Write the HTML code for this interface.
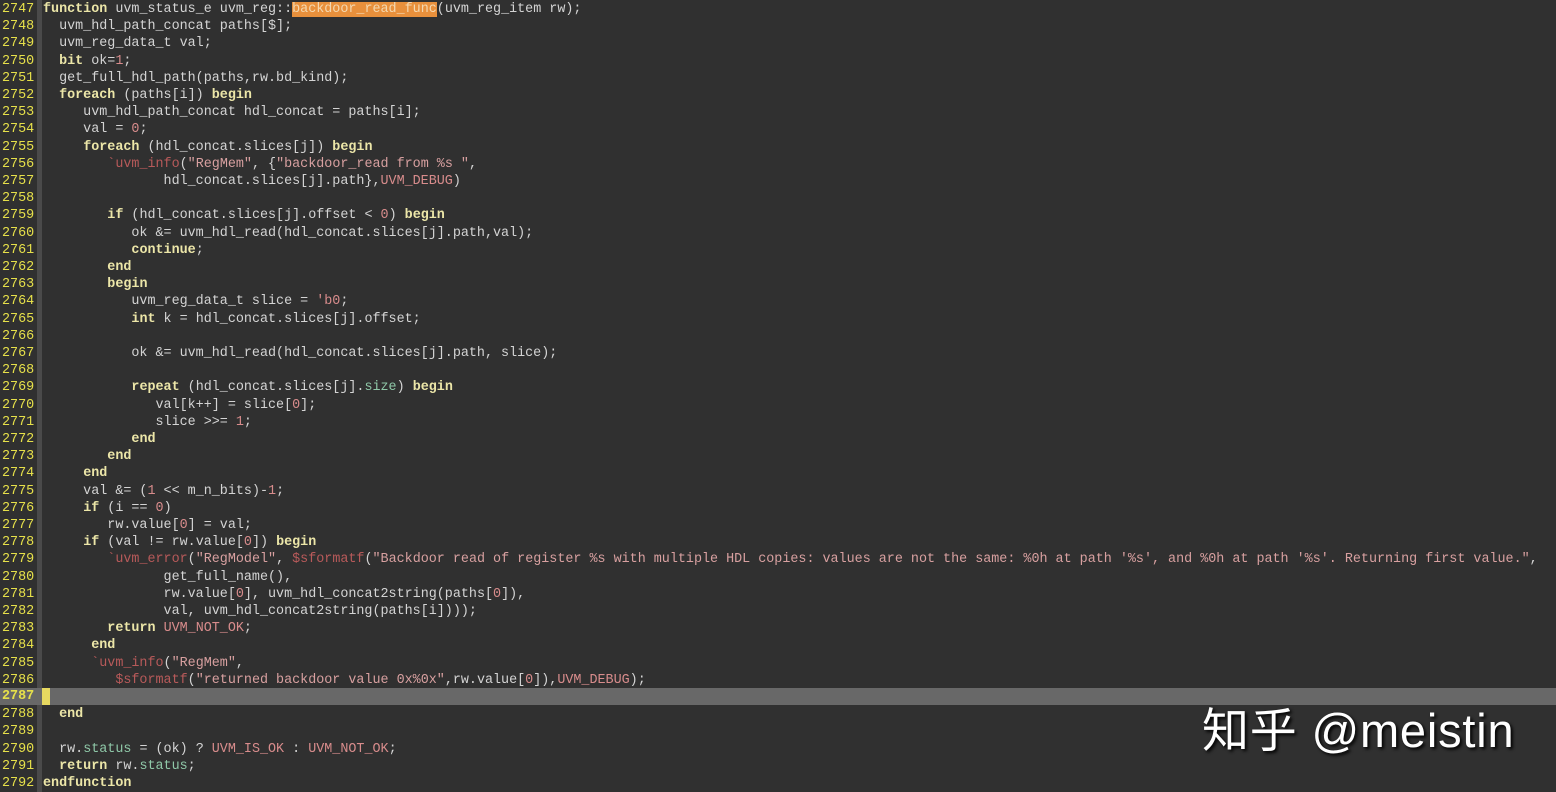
<!DOCTYPE html>
<html><head><meta charset="utf-8"><style>
body{margin:0;width:1556px;height:792px;background:#303030;overflow:hidden;position:relative;font-family:"Liberation Mono",monospace;font-size:13.4px;}
.l{position:absolute;left:0;height:17.2px;line-height:17.2px;width:1556px;white-space:pre;color:#d4d4d4;padding-top:1px}
.n{position:absolute;left:2px;width:33px;color:#e6e04a;}
.g{position:absolute;left:37px;top:0;width:5px;height:792px;background:#4a4a4a}
.c{position:absolute;left:43px}
.k{color:#ece6a8;font-weight:bold}
.s{color:#d8a0a0}
.m{color:#b85a5a}
.v{color:#d88c8c}
.t{color:#8fc8a8}
.hl{background:#e8903c;color:#f4d8b0}
.cur{background:#686868;padding-top:0;top:688px!important}
.wm{position:absolute;left:1202px;top:692px;font-family:"Liberation Sans","Noto Sans CJK SC",sans-serif;font-size:47px;color:#fff;text-shadow:2px 2px 3px #000;letter-spacing:0.8px}
</style></head><body>
<div class="g"></div>
<div class="l" style="top:0px"><span class="n">2747</span><span class="c"><span class="k">function</span> uvm_status_e uvm_reg::<span class="hl">backdoor_read_func</span>(uvm_reg_item rw);</span></div>
<div class="l" style="top:17.2px"><span class="n">2748</span><span class="c">  uvm_hdl_path_concat paths[$];</span></div>
<div class="l" style="top:34.4px"><span class="n">2749</span><span class="c">  uvm_reg_data_t val;</span></div>
<div class="l" style="top:51.6px"><span class="n">2750</span><span class="c">  <span class="k">bit</span> ok=<span class="v">1</span>;</span></div>
<div class="l" style="top:68.8px"><span class="n">2751</span><span class="c">  get_full_hdl_path(paths,rw.bd_kind);</span></div>
<div class="l" style="top:86px"><span class="n">2752</span><span class="c">  <span class="k">foreach</span> (paths[i]) <span class="k">begin</span></span></div>
<div class="l" style="top:103.2px"><span class="n">2753</span><span class="c">     uvm_hdl_path_concat hdl_concat = paths[i];</span></div>
<div class="l" style="top:120.4px"><span class="n">2754</span><span class="c">     val = <span class="v">0</span>;</span></div>
<div class="l" style="top:137.6px"><span class="n">2755</span><span class="c">     <span class="k">foreach</span> (hdl_concat.slices[j]) <span class="k">begin</span></span></div>
<div class="l" style="top:154.8px"><span class="n">2756</span><span class="c">        <span class="m">`uvm_info</span>(<span class="s">"RegMem"</span>, {<span class="s">"backdoor_read from %s "</span>,</span></div>
<div class="l" style="top:172px"><span class="n">2757</span><span class="c">               hdl_concat.slices[j].path},<span class="v">UVM_DEBUG</span>)</span></div>
<div class="l" style="top:189.2px"><span class="n">2758</span></div>
<div class="l" style="top:206.4px"><span class="n">2759</span><span class="c">        <span class="k">if</span> (hdl_concat.slices[j].offset &lt; <span class="v">0</span>) <span class="k">begin</span></span></div>
<div class="l" style="top:223.6px"><span class="n">2760</span><span class="c">           ok &amp;= uvm_hdl_read(hdl_concat.slices[j].path,val);</span></div>
<div class="l" style="top:240.8px"><span class="n">2761</span><span class="c">           <span class="k">continue</span>;</span></div>
<div class="l" style="top:258px"><span class="n">2762</span><span class="c">        <span class="k">end</span></span></div>
<div class="l" style="top:275.2px"><span class="n">2763</span><span class="c">        <span class="k">begin</span></span></div>
<div class="l" style="top:292.4px"><span class="n">2764</span><span class="c">           uvm_reg_data_t slice = <span class="v">'b0</span>;</span></div>
<div class="l" style="top:309.6px"><span class="n">2765</span><span class="c">           <span class="k">int</span> k = hdl_concat.slices[j].offset;</span></div>
<div class="l" style="top:326.8px"><span class="n">2766</span></div>
<div class="l" style="top:344px"><span class="n">2767</span><span class="c">           ok &amp;= uvm_hdl_read(hdl_concat.slices[j].path, slice);</span></div>
<div class="l" style="top:361.2px"><span class="n">2768</span></div>
<div class="l" style="top:378.4px"><span class="n">2769</span><span class="c">           <span class="k">repeat</span> (hdl_concat.slices[j].<span class="t">size</span>) <span class="k">begin</span></span></div>
<div class="l" style="top:395.6px"><span class="n">2770</span><span class="c">              val[k++] = slice[<span class="v">0</span>];</span></div>
<div class="l" style="top:412.8px"><span class="n">2771</span><span class="c">              slice &gt;&gt;= <span class="v">1</span>;</span></div>
<div class="l" style="top:430px"><span class="n">2772</span><span class="c">           <span class="k">end</span></span></div>
<div class="l" style="top:447.2px"><span class="n">2773</span><span class="c">        <span class="k">end</span></span></div>
<div class="l" style="top:464.4px"><span class="n">2774</span><span class="c">     <span class="k">end</span></span></div>
<div class="l" style="top:481.6px"><span class="n">2775</span><span class="c">     val &amp;= (<span class="v">1</span> &lt;&lt; m_n_bits)-<span class="v">1</span>;</span></div>
<div class="l" style="top:498.8px"><span class="n">2776</span><span class="c">     <span class="k">if</span> (i == <span class="v">0</span>)</span></div>
<div class="l" style="top:516px"><span class="n">2777</span><span class="c">        rw.value[<span class="v">0</span>] = val;</span></div>
<div class="l" style="top:533.2px"><span class="n">2778</span><span class="c">     <span class="k">if</span> (val != rw.value[<span class="v">0</span>]) <span class="k">begin</span></span></div>
<div class="l" style="top:550.4px"><span class="n">2779</span><span class="c">        <span class="m">`uvm_error</span>(<span class="s">"RegModel"</span>, <span class="m">$sformatf</span>(<span class="s">"Backdoor read of register %s with multiple HDL copies: values are not the same: %0h at path '%s', and %0h at path '%s'. Returning first value."</span>,</span></div>
<div class="l" style="top:567.6px"><span class="n">2780</span><span class="c">               get_full_name(),</span></div>
<div class="l" style="top:584.8px"><span class="n">2781</span><span class="c">               rw.value[<span class="v">0</span>], uvm_hdl_concat2string(paths[<span class="v">0</span>]),</span></div>
<div class="l" style="top:602px"><span class="n">2782</span><span class="c">               val, uvm_hdl_concat2string(paths[i])));</span></div>
<div class="l" style="top:619.2px"><span class="n">2783</span><span class="c">        <span class="k">return</span> <span class="v">UVM_NOT_OK</span>;</span></div>
<div class="l" style="top:636.4px"><span class="n">2784</span><span class="c">      <span class="k">end</span></span></div>
<div class="l" style="top:653.6px"><span class="n">2785</span><span class="c">      <span class="m">`uvm_info</span>(<span class="s">"RegMem"</span>,</span></div>
<div class="l" style="top:670.8px"><span class="n">2786</span><span class="c">         <span class="m">$sformatf</span>(<span class="s">"returned backdoor value 0x%0x"</span>,rw.value[<span class="v">0</span>]),<span class="v">UVM_DEBUG</span>);</span></div>
<div class="l cur"><span class="n" style="font-weight:bold">2787</span><span style="position:absolute;left:42px;top:0;width:8px;height:17.2px;background:#e6d860"></span></div>
<div class="l" style="top:705.2px"><span class="n">2788</span><span class="c">  <span class="k">end</span></span></div>
<div class="l" style="top:722.4px"><span class="n">2789</span></div>
<div class="l" style="top:739.6px"><span class="n">2790</span><span class="c">  rw.<span class="t">status</span> = (ok) ? <span class="v">UVM_IS_OK</span> : <span class="v">UVM_NOT_OK</span>;</span></div>
<div class="l" style="top:756.8px"><span class="n">2791</span><span class="c">  <span class="k">return</span> rw.<span class="t">status</span>;</span></div>
<div class="l" style="top:774px"><span class="n">2792</span><span class="c"><span class="k">endfunction</span></span></div>
<div class="wm">知乎 @meistin</div>
</body></html>
